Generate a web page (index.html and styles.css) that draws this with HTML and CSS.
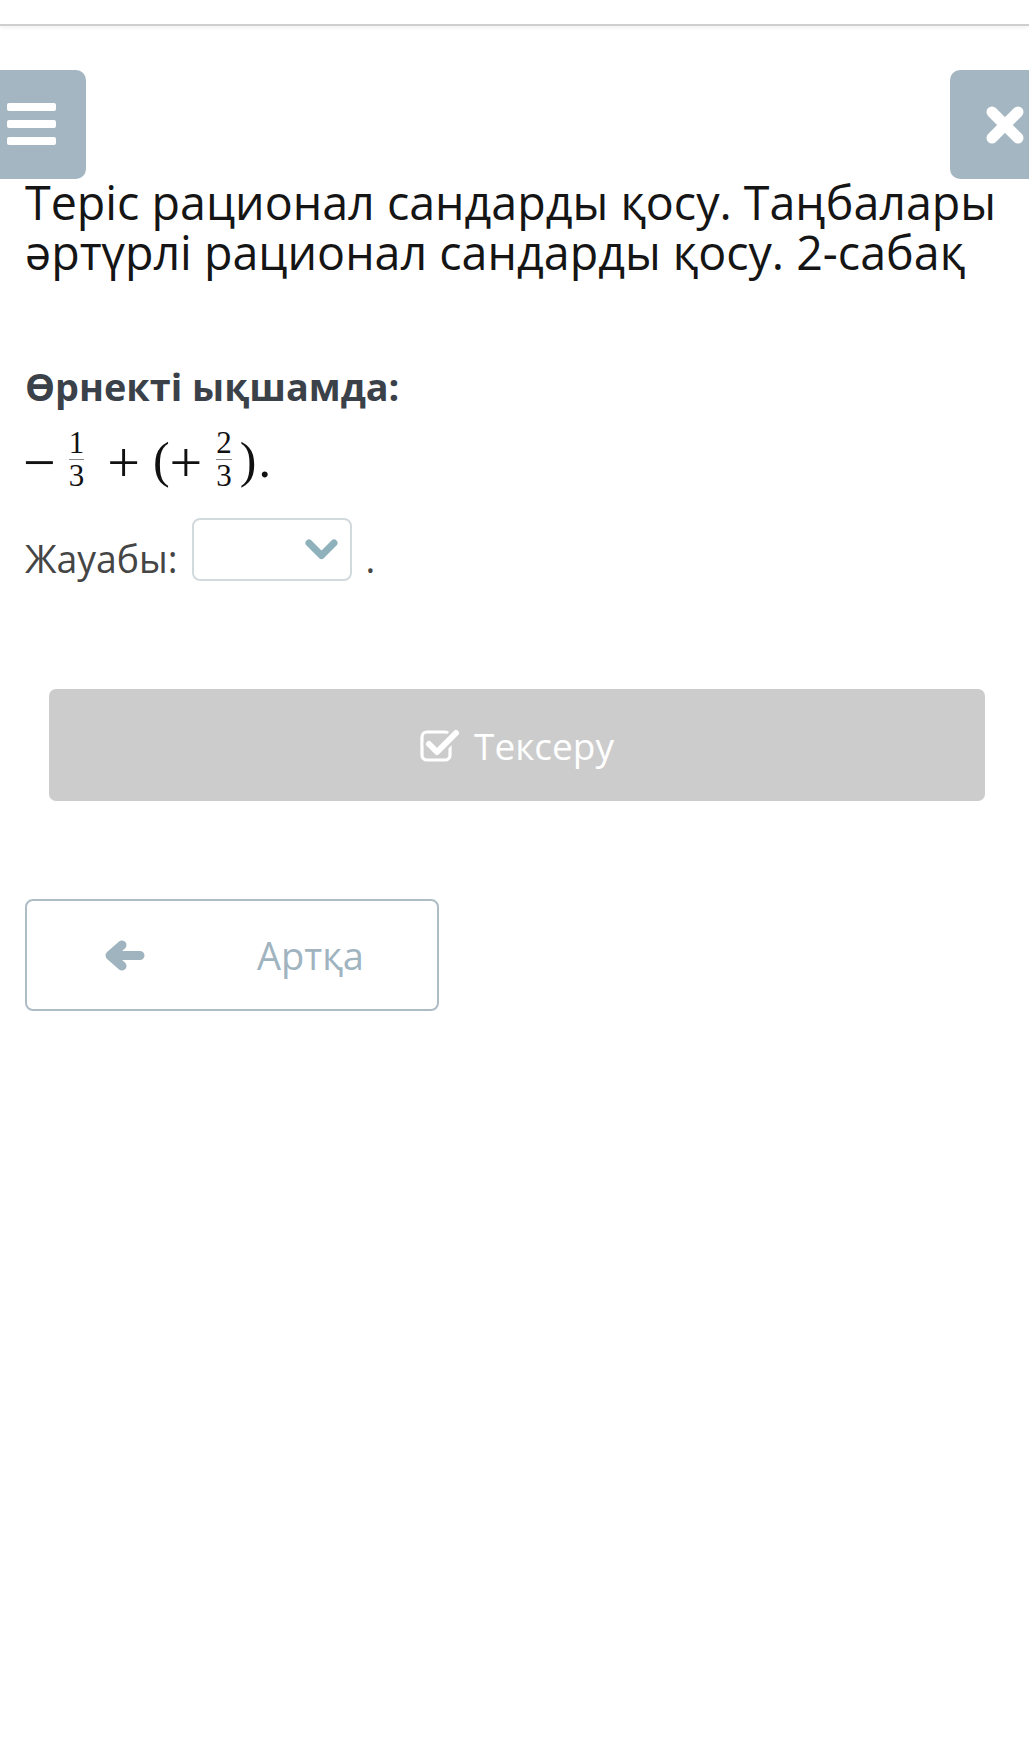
FILE: index.html
```html
<!DOCTYPE html>
<html lang="kk">
<head>
  <meta charset="UTF-8" />
  <meta name="viewport" content="width=device-width, initial-scale=1.0" />
  <title>Өрнекті ықшамда</title>
  <link rel="stylesheet" href="styles.css">
</head>
<body>
  <header class="topbar"></header>

  <button class="side-btn menu-btn" aria-label="Мәзір">
    <span class="bar"></span>
    <span class="bar"></span>
    <span class="bar"></span>
  </button>

  <button class="side-btn close-btn" aria-label="Жабу">
    <svg width="38" height="38" viewBox="0 0 38 38">
      <path d="M6 6 L32 32 M32 6 L6 32" stroke="#fff" stroke-width="11" stroke-linecap="round" fill="none" />
    </svg>
  </button>

  <main class="lesson">
    <h1 class="lesson-title">Теріс рационал сандарды қосу. Таңбалары әртүрлі рационал сандарды қосу. 2-сабақ</h1>

    <section class="task">
      <h2 class="task-label">Өрнекті ықшамда:</h2>

      <div class="math">
        <span class="mo minus">−</span>
        <span class="frac frac-first"><span class="num">1</span><span class="line"></span><span class="num">3</span></span>
        <span class="mo plus">+</span>
        <span class="paren lparen">(</span>
        <span class="mo plus-inner">+</span>
        <span class="frac frac-second"><span class="num">2</span><span class="line"></span><span class="num">3</span></span>
        <span class="paren rparen">)</span>
        <span class="paren dot">.</span>
      </div>

      <div class="answer-row">
        <span class="answer-label">Жауабы:</span>
        <div class="answer-select">
          <svg width="33" height="21" viewBox="0 0 33 21">
            <path d="M4 4 L16.5 16.5 L29 4" stroke="#8fb1bb" stroke-width="7" stroke-linecap="round" stroke-linejoin="round" fill="none" />
          </svg>
        </div>
        <span class="answer-end">.</span>
      </div>
    </section>

    <button class="check-btn">
      <svg width="42" height="34" viewBox="0 0 42 34">
        <rect x="2" y="4" width="28" height="28" rx="5" stroke="#fff" stroke-width="3.2" fill="none" />
        <path d="M9 16 L17 24 L36 5" stroke="#cccccc" stroke-width="11" stroke-linecap="round" stroke-linejoin="round" fill="none" />
        <path d="M9 16 L17 24 L36 5" stroke="#fff" stroke-width="6" stroke-linecap="round" stroke-linejoin="round" fill="none" />
      </svg>
      <span>Тексеру</span>
    </button>

    <div class="nav">
      <button class="back-btn">
        <svg width="41" height="31" viewBox="0 0 41 31">
          <path d="M36 15.5 H9 M18 5 L6 15.5 L18 26" stroke="#a0b4bf" stroke-width="9" stroke-linecap="round" stroke-linejoin="round" fill="none" />
        </svg>
        <span>Артқа</span>
      </button>
    </div>
  </main>
</body>
</html>
```

FILE: styles.css
```css
:root {
  --side-btn: #a3b6c2;
  --muted: #a0b4bf;
  --text-dark: #151515;
  --text-slate: #3b4149;
  --text-body: #454545;
}

body {
  margin: 0;
  font-family: "Open Sans", Arial, sans-serif;
  background-color: #fff;
  color: var(--text-dark);
  min-height: 1747px;
  overflow-x: hidden;
}

.topbar {
  height: 24px;
  border-bottom: 2px solid #cfcfcf;
  box-shadow: 0 2px 4px rgba(0, 0, 0, 0.06);
}

button {
  font-family: inherit;
  cursor: pointer;
}

.side-btn {
  position: absolute;
  top: 70px;
  height: 109px;
  border: none;
  background-color: var(--side-btn);
  padding: 0;
}

.menu-btn {
  left: 0;
  width: 86px;
  border-radius: 0 10px 10px 0;
  display: flex;
  flex-direction: column;
  align-items: flex-start;
  padding: 33px 0 0 7px;
  gap: 9px;
}

.menu-btn .bar {
  display: block;
  width: 49px;
  height: 8px;
  border-radius: 2px;
  background-color: #fff;
}

.close-btn {
  left: 950px;
  width: 100px;
  border-radius: 10px 0 0 10px;
  display: flex;
  align-items: center;
  padding-left: 36px;
}

.lesson {
  padding: 151px 16px 0 25px;
}

.lesson-title {
  margin: 0;
  font-size: 46.6px;
  font-weight: 400;
  line-height: 50px;
  color: var(--text-dark);
}

.task {
  margin-top: 88px;
}

.task-label {
  margin: 0;
  font-size: 37.8px;
  font-weight: 700;
  line-height: 44px;
  color: var(--text-slate);
}

/* math expression: -1/3 + (+2/3). */
.math {
  display: flex;
  align-items: center;
  height: 65px;
  margin-top: 18px;
  color: #111;
  font-family: "Liberation Serif", "Times New Roman", serif;
}

.mo {
  font-size: 58px;
  line-height: 1;
  margin-bottom: -7px;
}

.paren {
  font-size: 50px;
  line-height: 1;
  margin-bottom: 0;
}

.frac {
  display: inline-flex;
  flex-direction: column;
  align-items: center;
  font-size: 31px;
  padding: 0 2px;
}

.frac .num {
  line-height: 32px;
}

.frac .line {
  width: 100%;
  height: 1px;
  background-color: #888;
}

.minus {
  margin-left: -2px;
}

.frac-first {
  margin-left: 11px;
}

.plus {
  margin-left: 21px;
}

.lparen {
  margin-left: 13px;
}

.plus-inner {
  margin-left: 0;
}

.frac-second {
  margin-left: 12px;
}

.rparen {
  margin-left: 6px;
}

.dot {
  margin-left: 2px;
}

.answer-row {
  display: flex;
  align-items: flex-end;
  margin-top: 26px;
}

.answer-label {
  font-size: 37.4px;
  line-height: 44px;
  color: var(--text-body);
}

.answer-select {
  box-sizing: border-box;
  width: 160px;
  height: 63px;
  margin-left: 14px;
  border: 2px solid #d3dadd;
  border-radius: 8px;
  display: flex;
  align-items: center;
  justify-content: flex-end;
  padding-right: 12px;
}

.answer-end {
  font-size: 37px;
  line-height: 44px;
  margin-left: 14px;
  color: var(--text-body);
}

.check-btn {
  display: flex;
  align-items: center;
  justify-content: center;
  gap: 12px;
  width: 936px;
  height: 112px;
  margin: 108px 0 0 24px;
  border: none;
  border-radius: 7px;
  background-color: #cccccc;
  color: #fff;
  font-size: 37px;
}

.nav {
  margin-top: 98px;
}

.back-btn {
  box-sizing: border-box;
  display: flex;
  align-items: center;
  gap: 112px;
  width: 414px;
  height: 112px;
  padding: 0 0 0 77px;
  border: 2px solid #aebcc5;
  border-radius: 8px;
  background-color: #fff;
  color: var(--muted);
  font-size: 38px;
}
```
